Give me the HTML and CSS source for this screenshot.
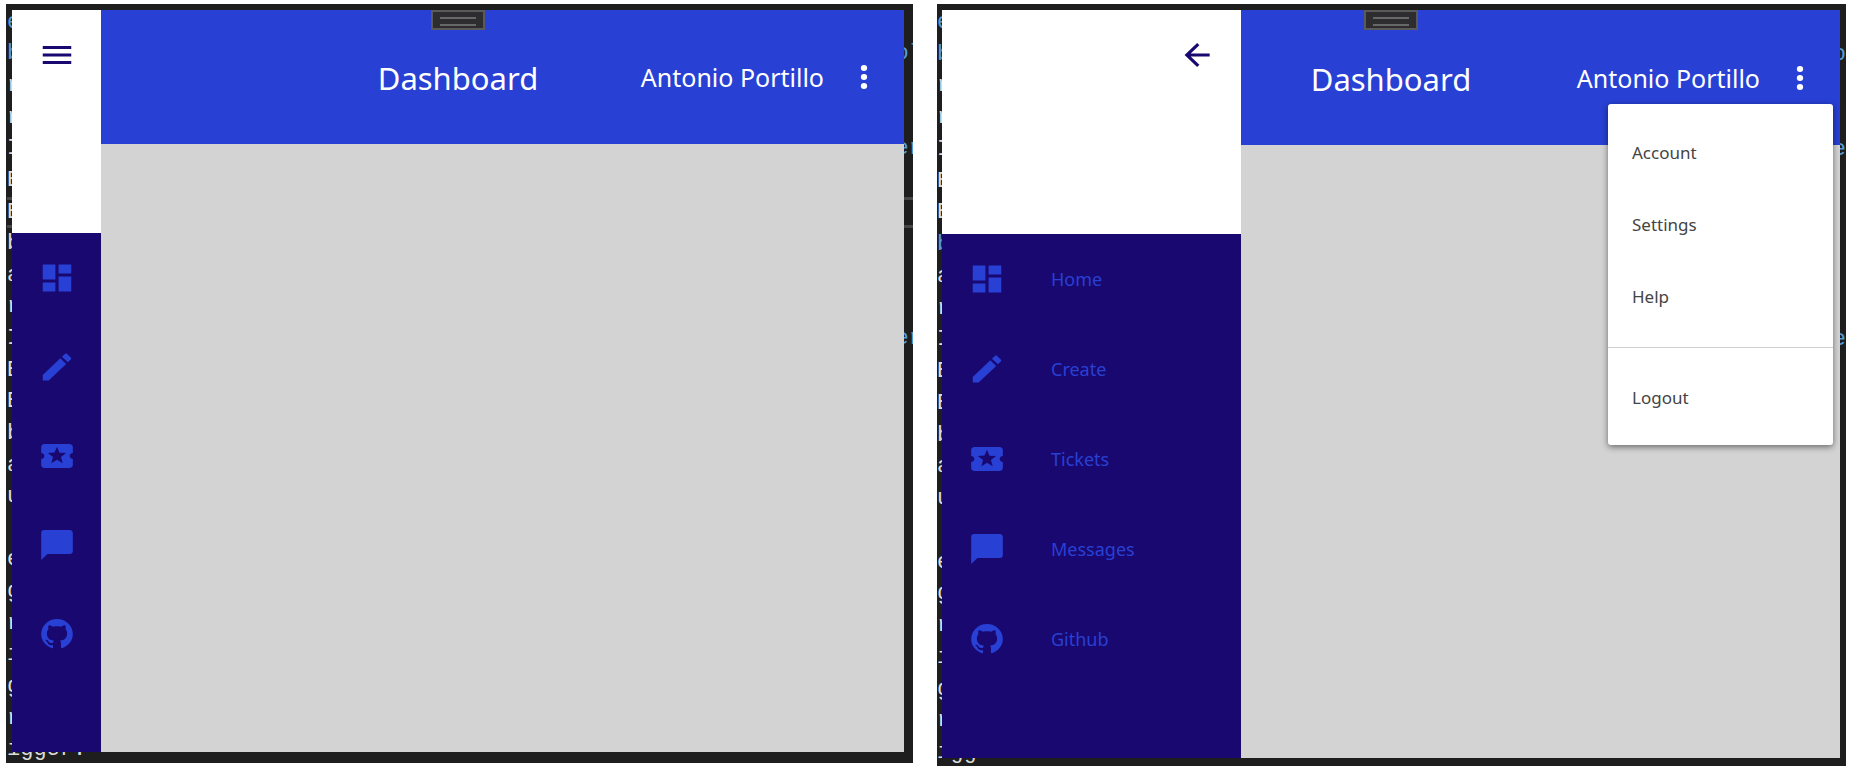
FILE: index.html
```html
<!DOCTYPE html>
<html lang="en">
<head>
<meta charset="utf-8">
<title>Dashboard</title>
<link rel="stylesheet" href="styles.css">
</head>
<body>
<svg class="sprite" aria-hidden="true">
  <symbol id="i-menu" viewBox="0 0 24 24" preserveAspectRatio="none"><path d="M3,6H21V8H3V6M3,11H21V13H3V11M3,16H21V18H3V16Z"/></symbol>
  <symbol id="i-back" viewBox="0 0 24 24" preserveAspectRatio="none"><path d="M20,11V13H8L13.5,18.5L12.08,19.92L4.16,12L12.08,4.08L13.5,5.5L8,11H20Z"/></symbol>
  <symbol id="i-dots" viewBox="0 0 24 24" preserveAspectRatio="none"><path d="M12,16A2,2 0 0,1 14,18A2,2 0 0,1 12,20A2,2 0 0,1 10,18A2,2 0 0,1 12,16M12,10A2,2 0 0,1 14,12A2,2 0 0,1 12,14A2,2 0 0,1 10,12A2,2 0 0,1 12,10M12,4A2,2 0 0,1 14,6A2,2 0 0,1 12,8A2,2 0 0,1 10,6A2,2 0 0,1 12,4Z"/></symbol>
  <symbol id="i-home" viewBox="0 0 24 24" preserveAspectRatio="none"><path d="M13,3V9H21V3M13,21H21V11H13M3,21H11V15H3M3,13H11V3H3V13Z"/></symbol>
  <symbol id="i-create" viewBox="0 0 24 24" preserveAspectRatio="none"><path d="M20.71,7.04C21.1,6.65 21.1,6 20.71,5.63L18.37,3.29C18,2.9 17.35,2.9 16.96,3.29L15.12,5.12L18.87,8.87M3,17.25V21H6.75L17.81,9.93L14.06,6.18L3,17.25Z"/></symbol>
  <symbol id="i-tickets" viewBox="0 0 24 24" preserveAspectRatio="none"><path d="M20 12c0-1.1.9-2 2-2V6c0-1.1-.9-2-2-2H4c-1.1 0-1.99.9-1.99 2v4c1.1 0 1.99.9 1.99 2s-.89 2-2 2v4c0 1.1.9 2 2 2h16c1.1 0 2-.9 2-2v-4c-1.1 0-2-.9-2-2zm-4.42 4.8L12 14.5l-3.58 2.3 1.08-4.12-3.29-2.69 4.24-.25L12 5.8l1.54 3.95 4.24.25-3.29 2.69 1.09 4.11z"/></symbol>
  <symbol id="i-messages" viewBox="0 0 24 24" preserveAspectRatio="none"><path d="M20,2H4A2,2 0 0,0 2,4V22L6,18H20A2,2 0 0,0 22,16V4C22,2.89 21.1,2 20,2Z"/></symbol>
  <symbol id="i-github" viewBox="0 0 24 24" preserveAspectRatio="none"><path d="M12,2A10,10 0 0,0 2,12C2,16.42 4.87,20.17 8.84,21.5C9.34,21.58 9.5,21.27 9.5,21C9.5,20.77 9.5,20.14 9.5,19.31C6.73,19.91 6.14,17.97 6.14,17.97C5.68,16.81 5.03,16.5 5.03,16.5C4.12,15.88 5.1,15.9 5.1,15.9C6.1,15.97 6.63,16.93 6.63,16.93C7.5,18.45 8.97,18 9.54,17.76C9.63,17.11 9.89,16.67 10.17,16.42C7.95,16.17 5.62,15.31 5.62,11.5C5.62,10.39 6,9.5 6.65,8.79C6.55,8.54 6.2,7.5 6.75,6.15C6.75,6.15 7.59,5.88 9.5,7.17C10.29,6.95 11.15,6.84 12,6.84C12.85,6.84 13.71,6.95 14.5,7.17C16.41,5.88 17.25,6.15 17.25,6.15C17.8,7.5 17.45,8.54 17.35,8.79C18,9.5 18.38,10.39 18.38,11.5C18.38,15.32 16.04,16.16 13.81,16.41C14.17,16.72 14.5,17.33 14.5,18.26C14.5,19.6 14.5,20.68 14.5,21C14.5,21.27 14.66,21.59 15.17,21.5C19.14,20.16 22,16.42 22,12A10,10 0 0,0 12,2Z"/></symbol>
</svg>

<section class="desk desk-collapsed">
  <div class="code" aria-hidden="true">
    <div class="line key">e</div>
    <div class="line key">b<span class="tail">ol</span></div>
    <div class="line">r</div>
    <div class="line">r</div>
    <div class="line">I<span class="tail">er</span></div>
    <div class="line">E</div>
    <div class="line current">E</div>
    <div class="line">b</div>
    <div class="line">a</div>
    <div class="line">r</div>
    <div class="line">I<span class="tail">er</span></div>
    <div class="line">E</div>
    <div class="line">E</div>
    <div class="line">b</div>
    <div class="line">a</div>
    <div class="line">u</div>
    <div class="line"></div>
    <div class="line">e</div>
    <div class="line">g</div>
    <div class="line">r</div>
    <div class="line">i</div>
    <div class="line">g</div>
    <div class="line">r</div>
    <div class="line">igger.</div>
  </div>
  <div class="app">
    <header class="header">
      <h1 class="title">Dashboard</h1>
      <div class="user">
        <span>Antonio Portillo</span>
        <button class="icon-button" type="button" aria-label="More"><svg class="icon"><use href="#i-dots"/></svg></button>
      </div>
    </header>
    <aside class="sidebar">
      <div class="brand"><button class="toggle" type="button" aria-label="Open menu"><svg class="icon"><use href="#i-menu"/></svg></button></div>
      <nav class="nav">
        <a class="nav-item" href="#home" aria-label="Home"><svg class="icon"><use href="#i-home"/></svg></a>
        <a class="nav-item" href="#create" aria-label="Create"><svg class="icon"><use href="#i-create"/></svg></a>
        <a class="nav-item" href="#tickets" aria-label="Tickets"><svg class="icon"><use href="#i-tickets"/></svg></a>
        <a class="nav-item" href="#messages" aria-label="Messages"><svg class="icon"><use href="#i-messages"/></svg></a>
        <a class="nav-item" href="#github" aria-label="Github"><svg class="icon"><use href="#i-github"/></svg></a>
      </nav>
    </aside>
    <main class="content"></main>
    <div class="handle"></div>
  </div>
</section>

<section class="desk desk-expanded">
  <div class="code" aria-hidden="true">
    <div class="line key">e</div>
    <div class="line key">b<span class="tail">o</span></div>
    <div class="line">r</div>
    <div class="line">r</div>
    <div class="line">I<span class="tail">e</span></div>
    <div class="line">E</div>
    <div class="line">E</div>
    <div class="line key">b</div>
    <div class="line">a</div>
    <div class="line">r</div>
    <div class="line">I<span class="tail">e</span></div>
    <div class="line">E</div>
    <div class="line">E</div>
    <div class="line">b</div>
    <div class="line">a</div>
    <div class="line">u</div>
    <div class="line"></div>
    <div class="line">e</div>
    <div class="line">g</div>
    <div class="line">r</div>
    <div class="line">i</div>
    <div class="line">g</div>
    <div class="line">r</div>
    <div class="line">igger.</div>
  </div>
  <div class="app">
    <header class="header">
      <h1 class="title">Dashboard</h1>
      <div class="user">
        <span>Antonio Portillo</span>
        <button class="icon-button" type="button" aria-label="More" aria-expanded="true"><svg class="icon"><use href="#i-dots"/></svg></button>
      </div>
    </header>
    <aside class="sidebar">
      <div class="brand"><button class="toggle" type="button" aria-label="Close menu"><svg class="icon"><use href="#i-back"/></svg></button></div>
      <nav class="nav">
        <a class="nav-item" href="#home"><svg class="icon"><use href="#i-home"/></svg><span>Home</span></a>
        <a class="nav-item" href="#create"><svg class="icon"><use href="#i-create"/></svg><span>Create</span></a>
        <a class="nav-item" href="#tickets"><svg class="icon"><use href="#i-tickets"/></svg><span>Tickets</span></a>
        <a class="nav-item" href="#messages"><svg class="icon"><use href="#i-messages"/></svg><span>Messages</span></a>
        <a class="nav-item" href="#github"><svg class="icon"><use href="#i-github"/></svg><span>Github</span></a>
      </nav>
    </aside>
    <main class="content"></main>
    <div class="handle"></div>
    <div class="menu">
      <button class="menu-item" type="button">Account</button>
      <button class="menu-item" type="button">Settings</button>
      <button class="menu-item" type="button">Help</button>
      <hr class="divider">
      <button class="menu-item" type="button">Logout</button>
    </div>
  </div>
</section>
</body>
</html>
```
FILE: styles.css
```css
* {
  box-sizing: border-box;
}

:root {
  --blue: #2840d4;
  --navy: #190870;
}

body {
  margin: 0;
  min-height: 100vh;
  display: flex;
  gap: 24px;
  padding: 4px 4px 2px 6px;
  background: #fff;
  font-family: "Noto Sans", "Open Sans", sans-serif;
}

button {
  border: 0;
  padding: 0;
  background: none;
  font: inherit;
  color: inherit;
  cursor: pointer;
}

.sprite {
  position: absolute;
  width: 0;
  height: 0;
}

.icon {
  display: block;
  width: 38px;
  height: 36px;
  flex: none;
  fill: currentColor;
}

/* Editor surface behind each app window */
.desk {
  min-width: 0;
  display: grid;
  background: #1e1e1e;
  overflow: hidden;
}

.desk-collapsed {
  --side: 89px;
  --head: 134px;
  --brand: 223px;
  --row: 89px;
  --tail: -9px;
  flex: 907;
  margin-bottom: 3px;
}

.desk-expanded {
  --side: 299px;
  --head: 135px;
  --brand: 224px;
  --row: 90px;
  --tail: 0px;
  flex: 909;
}

.code,
.app {
  grid-area: 1 / 1;
  min-width: 0;
}

.code {
  display: grid;
  grid-template-rows: repeat(24, minmax(0, 1fr));
  margin: 3px 0 -3px;
  font: 22px/24px "Liberation Mono", monospace;
  color: #dcdcdc;
}

.desk-collapsed .code {
  padding-left: 1px;
}

.line {
  display: flex;
  align-items: center;
  justify-content: space-between;
  min-height: 0;
}

.key,
.tail {
  color: #569cd6;
}

.tail {
  margin-left: auto;
  margin-right: var(--tail);
}

.current {
  border: solid #464646;
  border-width: 3px 0;
}

.app {
  position: relative;
  display: grid;
  grid-template: var(--head) 1fr / var(--side) 1fr;
}

.desk-collapsed .app {
  margin: 6px 9px 11px 6px;
}

.desk-expanded .app {
  margin: 6px 6px 8px 5px;
}

.header {
  grid-area: 1 / 1 / 2 / 3;
  display: grid;
  grid-template-columns: 1fr auto 1fr;
  align-items: center;
  background: var(--blue);
  color: #fff;
}

.title {
  grid-column: 2;
  margin: 0;
  padding-top: 2px;
  font-size: 31px;
  line-height: 44px;
  font-weight: 400;
}

.user {
  display: flex;
  align-items: center;
  justify-content: flex-end;
  gap: 21px;
  padding-right: 21px;
  font-size: 25px;
  line-height: 36px;
  white-space: nowrap;
}

.sidebar {
  grid-area: 1 / 1 / 3 / 2;
  z-index: 1;
  display: flex;
  flex-direction: column;
  background: var(--navy);
}

.brand {
  height: var(--brand);
  display: flex;
  justify-content: flex-end;
  align-items: flex-start;
  background: #fff;
}

.toggle {
  width: 89px;
  height: 90px;
  display: grid;
  place-items: center;
  color: var(--navy);
}

.nav-item {
  height: var(--row);
  display: flex;
  align-items: center;
  gap: 45px;
  padding-left: 26px;
  color: var(--blue);
  font-size: 18px;
  line-height: 26px;
  text-decoration: none;
}

.content {
  grid-area: 2 / 2;
  background: #d3d3d3;
}

.handle {
  position: absolute;
  top: 0;
  left: 50%;
  transform: translateX(-50%);
  width: 54px;
  height: 20px;
  padding: 5px 7px;
  border: 2px solid #5a5a5a;
  background: #2d2d30;
}

.handle::before {
  content: "";
  display: block;
  height: 5px;
  border: solid #686868;
  border-width: 2px 0;
}

.menu {
  position: absolute;
  z-index: 2;
  top: 94px;
  right: 7px;
  width: 225px;
  padding: 13px 0 11px;
  border-radius: 3px;
  background: #fff;
  box-shadow: 0 2px 6px rgba(0, 0, 0, 0.5);
  color: #444;
  font-size: 17px;
  line-height: 24px;
}

.menu-item {
  display: block;
  width: 100%;
  height: 72px;
  padding: 0 24px;
  text-align: left;
}

.divider {
  height: 1px;
  margin: 14px 0;
  border: 0;
  background: #d0d0d0;
}
```
